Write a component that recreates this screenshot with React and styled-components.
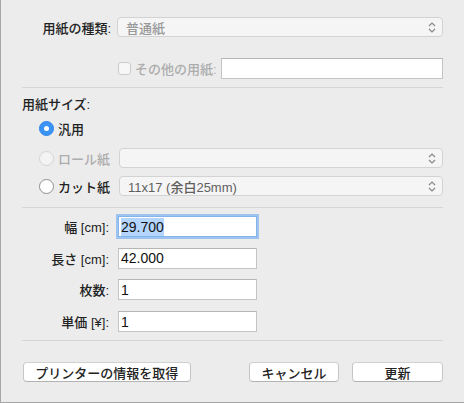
import React from 'react';
import styled, { createGlobalStyle } from 'styled-components';

const GlobalStyle = createGlobalStyle`
  html, body {
    margin: 0;
    padding: 0;
    background: #ececec;
  }
  * {
    box-sizing: border-box;
  }
`;

const Dialog = styled.div`
  width: 464px;
  height: 403px;
  background: #ececec;
  border-left: 1px solid #a6a6a6;
  border-bottom: 1px solid #a6a6a6;
  padding: 17px 21px 0 20px;
  display: flex;
  flex-direction: column;
  font-family: 'Liberation Sans', 'Noto Sans CJK JP', sans-serif;
  font-size: 13px;
  font-weight: 500;
  color: #222;
`;

const Row = styled.div`
  display: flex;
  align-items: center;
  height: ${(p) => p.h || 20}px;
  margin-top: ${(p) => p.mt || 0}px;
  padding-left: ${(p) => p.indent || 0}px;
  gap: ${(p) => (p.gap === undefined ? 6 : p.gap)}px;
`;

const Label = styled.div`
  width: ${(p) => (p.w ? `${p.w}px` : 'auto')};
  flex: none;
  text-align: right;
  white-space: nowrap;
  color: ${(p) => (p.disabled ? '#adadad' : '#222')};
`;

const SectionTitle = styled.div`
  margin-top: 9px;
  height: 16px;
  line-height: 16px;
  padding-left: 1px;
`;

const Separator = styled.div`
  height: 1px;
  background: #d6d6d6;
  margin: ${(p) => p.mt}px 0 0 1px;
`;

const SelectBox = styled.div`
  flex: 1;
  height: 20px;
  background: #f5f5f5;
  border: 1px solid #d3d3d3;
  border-radius: 4px;
  display: flex;
  align-items: center;
  padding: 0 6px 0 8px;
  color: ${(p) => p.tone || '#999'};
  white-space: nowrap;
`;

const SelectText = styled.span`
  flex: 1;
`;

const TextBox = styled.div`
  flex: ${(p) => (p.w ? 'none' : 1)};
  width: ${(p) => (p.w ? `${p.w}px` : 'auto')};
  height: 21px;
  background: #fff;
  border: 1px solid ${(p) => (p.focused ? '#86b3ea' : '#c4c4c4')};
  border-top-color: ${(p) => (p.focused ? '#86b3ea' : '#b5b5b5')};
  box-shadow: ${(p) => (p.focused ? '0 0 0 2px #9dc3f1' : 'none')};
  display: flex;
  align-items: center;
  padding-left: 2px;
  font-size: 14px;
  font-weight: 400;
  color: #111;
`;

const Selected = styled.span`
  background: #b4d5fe;
  padding: 1px 0;
`;

const CheckBox = styled.span`
  width: 13px;
  height: 13px;
  flex: none;
  background: #f7f7f7;
  border: 1px solid #cbcbcb;
  border-radius: 3px;
`;

const Radio = styled.span`
  width: 15px;
  height: 15px;
  flex: none;
  border-radius: 50%;
  display: flex;
  align-items: center;
  justify-content: center;
  background: ${(p) => (p.checked ? '#3b93f6' : p.disabled ? '#f3f3f3' : '#fff')};
  border: 1px solid ${(p) => (p.checked ? '#2f86ea' : p.disabled ? '#d4d4d4' : '#8e8e8e')};
  &::after {
    content: '';
    display: ${(p) => (p.checked ? 'block' : 'none')};
    width: 5px;
    height: 5px;
    border-radius: 50%;
    background: #fff;
  }
`;

const RadioOption = styled.div`
  width: 80px;
  flex: none;
  display: flex;
  align-items: center;
  gap: 4px;
  color: ${(p) => (p.disabled ? '#adadad' : '#222')};
  white-space: nowrap;
`;

const ButtonBar = styled.div`
  display: flex;
  align-items: center;
  margin-top: 21px;
  padding-left: 2px;
`;

const Button = styled.div`
  width: ${(p) => p.w}px;
  height: 20px;
  margin-left: ${(p) => p.ml || 0}px;
  background: #fff;
  border: 1px solid #c6c6c6;
  border-top-color: #d0d0d0;
  border-bottom-color: #b3b3b3;
  border-radius: 4px;
  display: flex;
  align-items: center;
  justify-content: center;
  color: #222;
  white-space: nowrap;
`;

const Chevrons = () => (
  <svg width="8" height="13" viewBox="0 0 8 13">
    <path d="M1 5 L4 2 L7 5" fill="none" stroke="#888" strokeWidth="1.2" />
    <path d="M1 8 L4 11 L7 8" fill="none" stroke="#888" strokeWidth="1.2" />
  </svg>
);

const Select = ({ children, tone }) => (
  <SelectBox tone={tone}>
    <SelectText>{children}</SelectText>
    <Chevrons />
  </SelectBox>
);

const fields = [
  { label: '幅 [cm]:', value: '29.700', focused: true },
  { label: '長さ [cm]:', value: '42.000' },
  { label: '枚数:', value: '1' },
  { label: '単価 [¥]:', value: '1' },
];

export default function App() {
  return (
    <>
      <GlobalStyle />
      <Dialog>
        <Row>
          <Label w={90}>用紙の種類:</Label>
          <Select>普通紙</Select>
        </Row>

        <Row mt={21} h={21} indent={97} gap={4}>
          <CheckBox />
          <Label disabled>その他の用紙:</Label>
          <TextBox />
        </Row>

        <Separator mt={8} />

        <SectionTitle>用紙サイズ:</SectionTitle>

        <Row mt={5} indent={18} gap={0}>
          <RadioOption>
            <Radio checked />
            汎用
          </RadioOption>
        </Row>

        <Row mt={10} indent={18} gap={0}>
          <RadioOption disabled>
            <Radio disabled />
            ロール紙
          </RadioOption>
          <Select />
        </Row>

        <Row mt={8} indent={18} gap={0}>
          <RadioOption>
            <Radio />
            カット紙
          </RadioOption>
          <Select tone="#5f5f5f">11x17 (余白25mm)</Select>
        </Row>

        <Separator mt={11} />

        {fields.map((f, i) => (
          <Row key={f.label} mt={i === 0 ? 8 : 10.7} h={21} gap={9}>
            <Label w={88}>{f.label}</Label>
            <TextBox w={139} focused={f.focused}>
              {f.focused ? <Selected>{f.value}</Selected> : f.value}
            </TextBox>
          </Row>
        ))}

        <Separator mt={8} />

        <ButtonBar>
          <Button w={168}>プリンターの情報を取得</Button>
          <Button w={91} ml={58}>キャンセル</Button>
          <Button w={91} ml={13}>更新</Button>
        </ButtonBar>
      </Dialog>
    </>
  );
}
